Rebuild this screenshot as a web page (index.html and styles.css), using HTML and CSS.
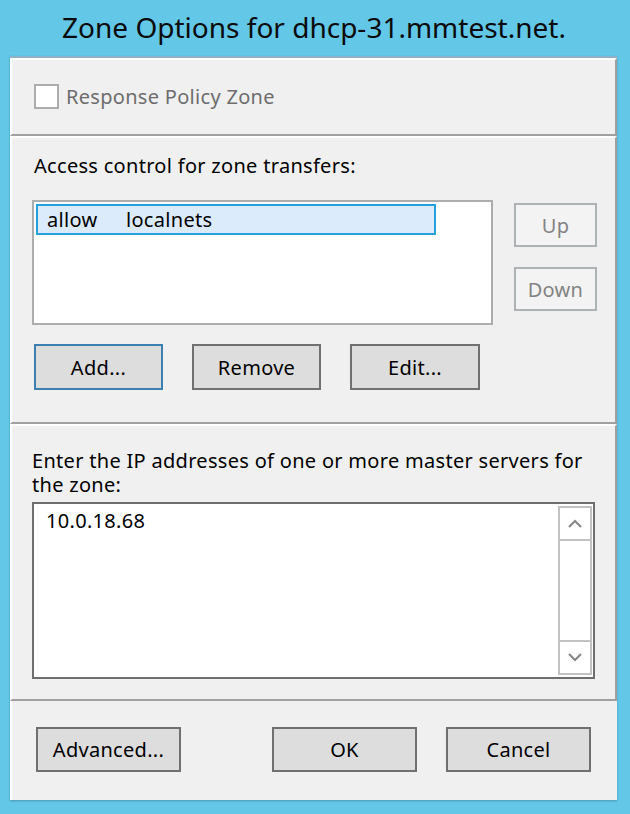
FILE: index.html
```html
<!DOCTYPE html>
<html lang="en">
<head>
<meta charset="utf-8">
<title>Zone Options</title>
<link rel="stylesheet" href="styles.css">
</head>
<body>
<div class="window">
  <div class="title">Zone Options for dhcp-31.mmtest.net.</div>
  <div class="dialog">
    <div class="section s-rpz">
      <label class="check disabled"><span class="box"></span><span>Response Policy Zone</span></label>
    </div>
    <div class="section s-acl">
      <div class="label">Access control for zone transfers:</div>
      <div class="acl-row">
        <div class="listbox">
          <div class="item selected"><span class="col-a">allow</span><span>localnets</span></div>
        </div>
        <div class="side-buttons">
          <div class="btn small disabled">Up</div>
          <div class="btn small disabled">Down</div>
        </div>
      </div>
      <div class="button-row">
        <div class="btn focus">Add...</div>
        <div class="btn">Remove</div>
        <div class="btn">Edit...</div>
      </div>
    </div>
    <div class="section s-masters">
      <div class="label two-line">Enter the IP addresses of one or more master servers for<br>the zone:</div>
      <div class="textarea">
        <div class="text">10.0.18.68</div>
        <div class="scrollbar">
          <div class="arrow up"><svg width="14" height="9" viewBox="0 0 14 9"><path d="M1 8 L7 2 L13 8" fill="none" stroke="#858585" stroke-width="2"/></svg></div>
          <div class="track"></div>
          <div class="arrow down"><svg width="14" height="9" viewBox="0 0 14 9"><path d="M1 1 L7 7 L13 1" fill="none" stroke="#858585" stroke-width="2"/></svg></div>
        </div>
      </div>
    </div>
    <div class="footer">
      <div class="btn wide">Advanced...</div>
      <div class="spacer"></div>
      <div class="btn wide">OK</div>
      <div class="btn wide">Cancel</div>
    </div>
  </div>
</div>
</body>
</html>
```

FILE: styles.css
```css
html, body {
  margin: 0;
  padding: 0;
}
body {
  background: #63c7e8;
  width: 630px;
  height: 814px;
  font-family: "Noto Sans", "Open Sans", sans-serif;
  font-size: 20px;
  letter-spacing: 0.3px;
  color: #000;
}
.window {
  width: 630px;
}
.title {
  height: 56px;
  line-height: 54px;
  font-size: 28px;
  letter-spacing: 0;
  text-align: center;
  padding-right: 2px;
  box-sizing: border-box;
  color: #0a0a0a;
}
.dialog {
  margin-left: 10px;
  width: 607px;
  background: #f0f0f0;
  border-top: 2px solid #8fb2c6;
  box-shadow: 0 1px 2px rgba(0, 0, 0, 0.25);
}
.section {
  border-style: solid;
  border-width: 2px;
  border-color: #ffffff #a0a0a0 #a0a0a0 #ffffff;
}
.s-rpz {
  height: 74px;
  padding-left: 22px;
  display: flex;
  align-items: center;
}
.check {
  display: flex;
  align-items: center;
  gap: 7px;
  line-height: 24px;
  margin-top: -1px;
}
.check .box {
  width: 21px;
  height: 21px;
  border: 2px solid #adadad;
  background: #fff;
}
.disabled {
  color: #6d6d6d;
}
.s-acl {
  box-sizing: content-box;
  padding: 16px 0 0 20px;
  height: 268px;
}
.label {
  line-height: 24px;
  margin-left: 2px;
}
.label.two-line {
  margin-left: 0;
}
.acl-row {
  display: flex;
  margin-top: 22px;
  gap: 21px;
}
.listbox {
  width: 461px;
  height: 125px;
  box-sizing: border-box;
  border: 2px solid #adadad;
  background: #fff;
  padding: 2px;
}
.item {
  width: 400px;
  height: 31px;
  box-sizing: border-box;
  line-height: 27px;
  padding-left: 9px;
  display: flex;
}
.item.selected {
  background: #dcebfc;
  border: 2px solid #26a0da;
}
.col-a {
  width: 79px;
}
.side-buttons {
  display: flex;
  flex-direction: column;
  gap: 20px;
  padding-top: 3px;
}
.btn {
  box-sizing: border-box;
  border: 2px solid #707070;
  background: #dddddd;
  display: flex;
  align-items: center;
  justify-content: center;
  width: 129px;
  height: 46px;
}
.btn.focus {
  border-color: #3c7fb1;
}
.btn.small {
  width: 83px;
  height: 44px;
  border-color: #adb2b5;
  background: #f3f3f3;
  color: #838383;
}
.button-row {
  display: flex;
  gap: 29px;
  margin-top: 19px;
  margin-left: 2px;
}
.button-row .btn:last-child {
  width: 130px;
}
.s-masters {
  padding: 23px 20px 0 20px;
  height: 250px;
}
.textarea {
  margin-top: 5px;
  height: 177px;
  box-sizing: border-box;
  border: 2px solid #6e6e6e;
  background: #fff;
  display: flex;
}
.textarea .text {
  flex: 1;
  padding: 5px 0 0 12px;
  line-height: 24px;
}
.scrollbar {
  width: 34px;
  margin: 2px 1px 2px 0;
  box-sizing: border-box;
  border: 2px solid #c2c2c2;
  display: flex;
  flex-direction: column;
}
.arrow {
  height: 31px;
  display: flex;
  align-items: center;
  justify-content: center;
}
.arrow.up {
  border-bottom: 2px solid #c2c2c2;
}
.arrow.down {
  border-top: 2px solid #c2c2c2;
}
.track {
  flex: 1;
}
.footer {
  height: 99px;
  box-sizing: border-box;
  border-left: 2px solid #ffffff;
  padding: 26px 0 0 24px;
  display: flex;
  align-items: flex-start;
}
.btn.wide {
  width: 145px;
  height: 45px;
}
.footer .spacer {
  width: 91px;
}
.footer .btn + .btn {
  margin-left: 29px;
}
```
